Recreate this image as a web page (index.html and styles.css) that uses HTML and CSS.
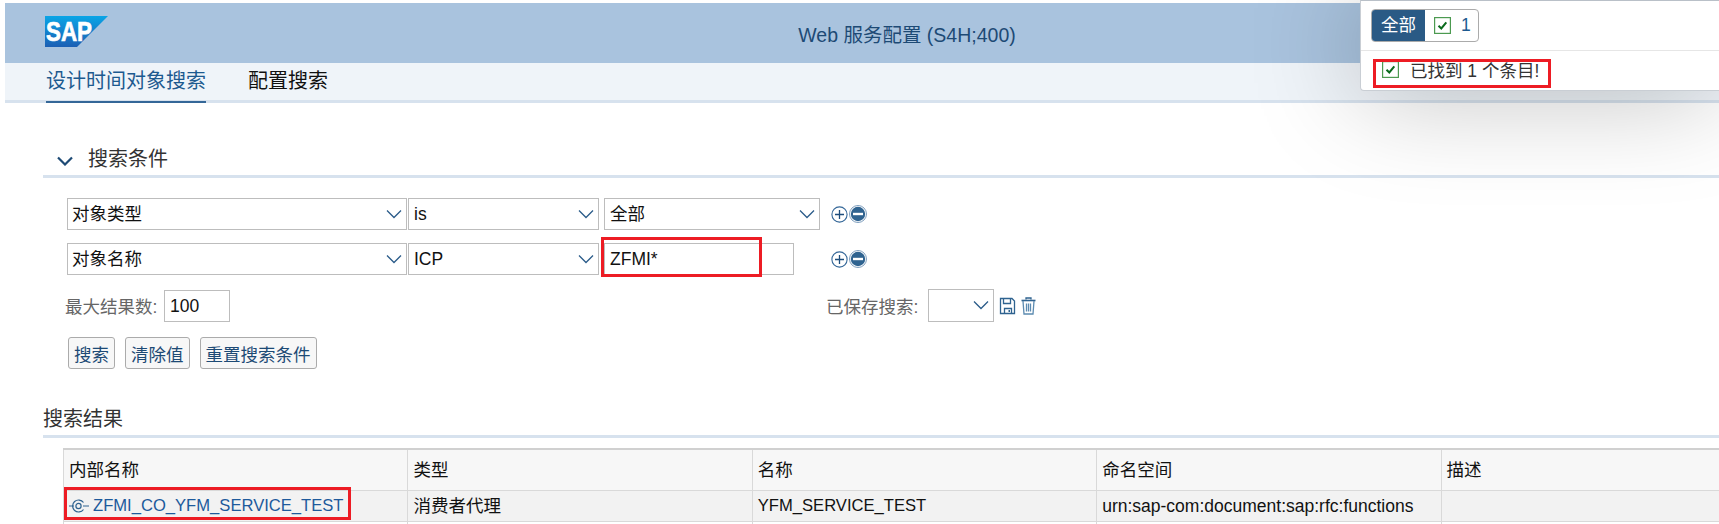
FILE: index.html
```html
<!DOCTYPE html>
<html lang="en">
<head>
  <meta charset="UTF-8">
  <meta name="viewport" content="width=device-width, initial-scale=1.0">
  <title>Web 服务配置</title>
  <link rel="stylesheet" href="styles.css">
</head>
<body>
  <svg class="defs" width="0" height="0">
    <symbol id="chev" viewBox="0 0 16 10"><path d="M1 1.5 8 8.5 15 1.5" fill="none" stroke="#2b5c8a" stroke-width="1.3"/></symbol>
    <symbol id="plus" viewBox="0 0 17 17"><circle cx="8.5" cy="8.5" r="7.6" fill="#fff" stroke="#346798" stroke-width="1.1"/><path d="M8.5 4v9M4 8.5h9" stroke="#1d4d7c" stroke-width="1.3"/></symbol>
    <symbol id="minus" viewBox="0 0 18 18"><circle cx="9" cy="9" r="8.5" fill="#fff" stroke="#7d9dbd" stroke-width="1"/><circle cx="9" cy="9" r="7.2" fill="#2f6390"/><path d="M4 9h10" stroke="#fff" stroke-width="2.4"/></symbol>
    <symbol id="check" viewBox="0 0 17 17"><rect x=".6" y=".6" width="15.8" height="15.8" fill="#fff" stroke="#4c9a50" stroke-width="1.2"/><path d="M4.5 8.7 7.3 11.5 12.3 5.4" fill="none" stroke="#0b6b1d" stroke-width="2"/></symbol>
  </svg>

  <div class="page">
    <!-- Barra de título -->
    <header class="shell">
      <svg class="logo" width="63" height="31" viewBox="0 0 63 31">
        <defs>
          <linearGradient id="sapBlue" x1="0" y1="0" x2="0" y2="1">
            <stop offset="0" stop-color="#0aa5e6"/>
            <stop offset="1" stop-color="#1c5fb4"/>
          </linearGradient>
        </defs>
        <polygon points="0,0 63,0 32,31 0,31" fill="url(#sapBlue)"/>
        <text x="1" y="25" class="logo-text" textLength="46" lengthAdjust="spacingAndGlyphs">SAP</text>
      </svg>
      <div class="shell-title">Web 服务配置 (S4H;400)</div>
    </header>

    <nav class="tabs">
      <a class="tab tab-active">设计时间对象搜索</a>
      <a class="tab">配置搜索</a>
    </nav>

    <!-- Condições de busca -->
    <section class="search">
      <h2 class="section-head">
        <svg class="head-chev" width="16" height="10" viewBox="0 0 16 10"><path d="M1 1.5 8 8.5 15 1.5" fill="none" stroke="#1d4a75" stroke-width="2.2"/></svg>
        搜索条件
      </h2>

      <div class="cond cond-first">
        <div class="field w-attr">对象类型<svg class="chev" width="16" height="10"><use href="#chev"/></svg></div>
        <div class="field w-op">is<svg class="chev" width="16" height="10"><use href="#chev"/></svg></div>
        <div class="field w-val">全部<svg class="chev" width="16" height="10"><use href="#chev"/></svg></div>
        <div class="pm pm-first">
          <svg width="17" height="17"><use href="#plus"/></svg>
          <svg width="18" height="18"><use href="#minus"/></svg>
        </div>
      </div>

      <div class="cond">
        <div class="field w-attr">对象名称<svg class="chev" width="16" height="10"><use href="#chev"/></svg></div>
        <div class="field w-op">ICP<svg class="chev" width="16" height="10"><use href="#chev"/></svg></div>
        <div class="field w-input">ZFMI*</div>
        <div class="pm pm-second">
          <svg width="17" height="17"><use href="#plus"/></svg>
          <svg width="18" height="18"><use href="#minus"/></svg>
        </div>
      </div>

      <div class="options">
        <span class="lbl lbl-max">最大结果数:</span>
        <div class="field w-max">100</div>
        <span class="lbl lbl-saved">已保存搜索:</span>
        <div class="field w-saved"><svg class="chev" width="16" height="10"><use href="#chev"/></svg></div>
        <svg class="tool" width="17" height="18" viewBox="0 0 17 18" fill="none" stroke="#2f6390" stroke-width="1.3">
          <path d="M1.5 1.5h11.5l2.5 2.5v12.5h-14z"/>
          <path d="M4.5 1.5v5h7v-5M5.5 16.5v-5h7v5"/>
          <path d="M9.5 13h1.5v2h-1.5z" fill="#2f6390" stroke="none"/>
        </svg>
        <svg class="tool tool-trash" width="15" height="18" viewBox="0 0 15 18" fill="none" stroke="#5b8ab0" stroke-width="1.3">
          <path d="M5 2.5V1h5v1.5" stroke="#2f6390"/>
          <path d="M.5 3.5h14" stroke="#2f6390" stroke-width="1.6"/>
          <path d="M2 4l1 13h9l1-13M5.5 6.5v8M7.5 6.5v8M9.5 6.5v8"/>
        </svg>
      </div>

      <div class="buttons">
        <button class="btn">搜索</button>
        <button class="btn">清除值</button>
        <button class="btn">重置搜索条件</button>
      </div>
    </section>

    <!-- Resultados -->
    <section class="results">
      <h2 class="section-head plain">搜索结果</h2>
      <table class="grid">
        <thead>
          <tr><th>内部名称</th><th>类型</th><th>名称</th><th>命名空间</th><th>描述</th></tr>
        </thead>
        <tbody>
          <tr>
            <td>
              <a class="link">
                <svg width="20" height="14" viewBox="0 0 20 14" fill="none" stroke="#2f6390" stroke-width="1.2">
                  <path d="M0 7h5M14 7h6"/>
                  <circle cx="9.5" cy="7" r="2.6"/>
                  <path d="M14.5 3.5A6 6 0 1 0 14.5 10.5"/>
                </svg>
                ZFMI_CO_YFM_SERVICE_TEST
              </a>
            </td>
            <td>消费者代理</td>
            <td class="narrow">YFM_SERVICE_TEST</td>
            <td>urn:sap-com:document:sap:rfc:functions</td>
            <td></td>
          </tr>
          <tr class="blank"><td></td><td></td><td></td><td></td><td></td></tr>
        </tbody>
      </table>
    </section>
  </div>

  <!-- Mensagens -->
  <aside class="popup">
    <div class="popup-top">
      <div class="seg">
        <span class="seg-on">全部</span>
        <span class="seg-off"><svg width="17" height="17"><use href="#check"/></svg>1</span>
      </div>
    </div>
    <div class="popup-msg"><svg width="17" height="17"><use href="#check"/></svg>已找到 1 个条目!</div>
  </aside>

  <!-- Marcações vermelhas do print -->
  <div class="mark mark-input"></div>
  <div class="mark mark-link"></div>
  <div class="mark mark-msg"></div>
</body>
</html>
```

FILE: styles.css
```css
html, body {
  margin: 0;
  height: 524px;
  overflow: hidden;
  background: white;
}
body {
  position: relative;
  font-family: "Liberation Sans", "Noto Sans CJK SC", sans-serif;
  font-size: 17.5px;
  color: #111;
}
.defs {
  position: absolute;
}
.page {
  padding: 3px 0 0 5px;
}
.shell {
  height: 60px;
  background-color: #a9c3de;
  display: flex;
  align-items: center;
  justify-content: center;
  position: relative;
}
.logo {
  position: absolute;
  left: 40px;
  top: 13px;
}
.logo-text {
  font-family: "Liberation Sans", sans-serif;
  font-size: 28px;
  font-weight: bold;
  fill: white;
  stroke: white;
  stroke-width: 0.7px;
}
.shell-title {
  color: #1d4a75;
  font-size: 19.5px;
  margin-left: 90px;
}
.tabs {
  height: 37px;
  background-color: #eff4f9;
  border-bottom: 3px solid #d7e2ee;
  display: flex;
  padding-left: 41px;
  gap: 42px;
}
.tab {
  font-size: 20px;
  line-height: 36px;
  height: 37px;
  margin-bottom: -3px;
}
.tab-active {
  color: #1d5a8f;
  height: 38px;
  border-bottom: 2px solid #346798;
}
.search {
  padding: 0 0 0 38px;
}
.section-head {
  margin: 0;
  font-size: 20px;
  font-weight: normal;
  color: #333;
  height: 75px;
  box-sizing: border-box;
  padding: 41px 0 0 45px;
  line-height: 31px;
  border-bottom: 3px solid #d7e2ee;
  position: relative;
}
.head-chev {
  position: absolute;
  left: 14px;
  top: 53px;
}
.section-head.plain {
  height: 69px;
  padding: 35px 0 0 0;
  line-height: 31px;
}
.cond {
  display: flex;
  margin: 13px 0 0 24px;
  gap: 1px;
}
.cond-first {
  margin-top: 20px;
}
.field {
  height: 32px;
  box-sizing: border-box;
  border: 1px solid #bdbdbd;
  line-height: 30px;
  padding-left: 5px;
  position: relative;
  white-space: nowrap;
}
.chev {
  position: absolute;
  right: 4px;
  top: 10px;
}
.w-attr { width: 340px; padding-left: 4px; }
.w-op { width: 191px; margin-right: 4px; }
.w-val { width: 216px; }
.w-input { width: 190px; }
.pm {
  display: flex;
  align-items: center;
  gap: 1px;
}
.pm-first { margin-left: 10px; }
.pm-second { margin-left: 36px; }
.options {
  display: flex;
  align-items: center;
  margin: 14px 0 0 22px;
}
.lbl {
  color: #666;
  white-space: nowrap;
}
.lbl-max { width: 99px; }
.w-max { width: 66px; }
.lbl-saved { margin-left: 596px; width: 102px; }
.w-saved { width: 66px; height: 33px; }
.tool { margin-left: 5px; }
.buttons {
  display: flex;
  gap: 10px;
  margin: 15px 0 0 25px;
}
.btn {
  height: 32px;
  padding: 0 5px;
  font: inherit;
  color: #1d4a75;
  background: #f7f7f7;
  border: 1px solid #ababab;
  border-radius: 3px;
}
.results {
  padding-left: 38px;
}
.grid {
  margin: 10px 0 0 20px;
  border-collapse: collapse;
  table-layout: fixed;
  width: 1723px;
}
.grid th, .grid td {
  border: 1px solid #d9d9d9;
  padding: 0 5px;
  font-weight: normal;
  text-align: left;
  white-space: nowrap;
  overflow: hidden;
  line-height: 20px;
}
.grid th {
  height: 40px;
  background: #f7f7f7;
  border-top: 2px solid #d0d0d0;
}
.grid td {
  height: 30px;
  background: #f2f2f2;
}
.grid .narrow {
  font-size: 16.6px;
}
.grid .blank td {
  background: white;
  height: 10px;
}
.link {
  color: #1d5a9c;
  font-size: 16.6px;
  display: flex;
  align-items: center;
  gap: 4px;
}
.popup {
  position: absolute;
  left: 1360px;
  top: 0;
  width: 359px;
  height: 91px;
  box-sizing: border-box;
  background: white;
  border: 1px solid #c9ced4;
  border-top-color: #b9c0c8;
  border-right: none;
  border-radius: 0 0 0 4px;
  box-shadow: 0 0 110px rgba(0, 0, 0, 0.28);
}
.popup-top {
  height: 50px;
  box-sizing: border-box;
  padding: 8px 0 0 10px;
  border-bottom: 1px solid #e6e6e6;
}
.seg {
  display: inline-flex;
  height: 33px;
  box-sizing: border-box;
  border: 1px solid #ababab;
  border-radius: 4px;
  overflow: hidden;
}
.seg-on {
  width: 53px;
  background: #2a5a85;
  color: white;
  text-align: center;
  line-height: 31px;
}
.seg-off {
  width: 53px;
  box-sizing: border-box;
  padding-left: 9px;
  display: flex;
  align-items: center;
  gap: 10px;
  color: #1d5a8f;
}
.popup-msg {
  display: flex;
  align-items: center;
  gap: 11px;
  padding: 6px 0 0 21px;
  color: #333;
}
.mark {
  position: absolute;
  box-sizing: border-box;
  border: 3px solid #ed1c24;
}
.mark-input { left: 601px; top: 237px; width: 161px; height: 40px; }
.mark-link { left: 64px; top: 487px; width: 287px; height: 33px; }
.mark-msg { left: 1373px; top: 59px; width: 178px; height: 29px; }
```
